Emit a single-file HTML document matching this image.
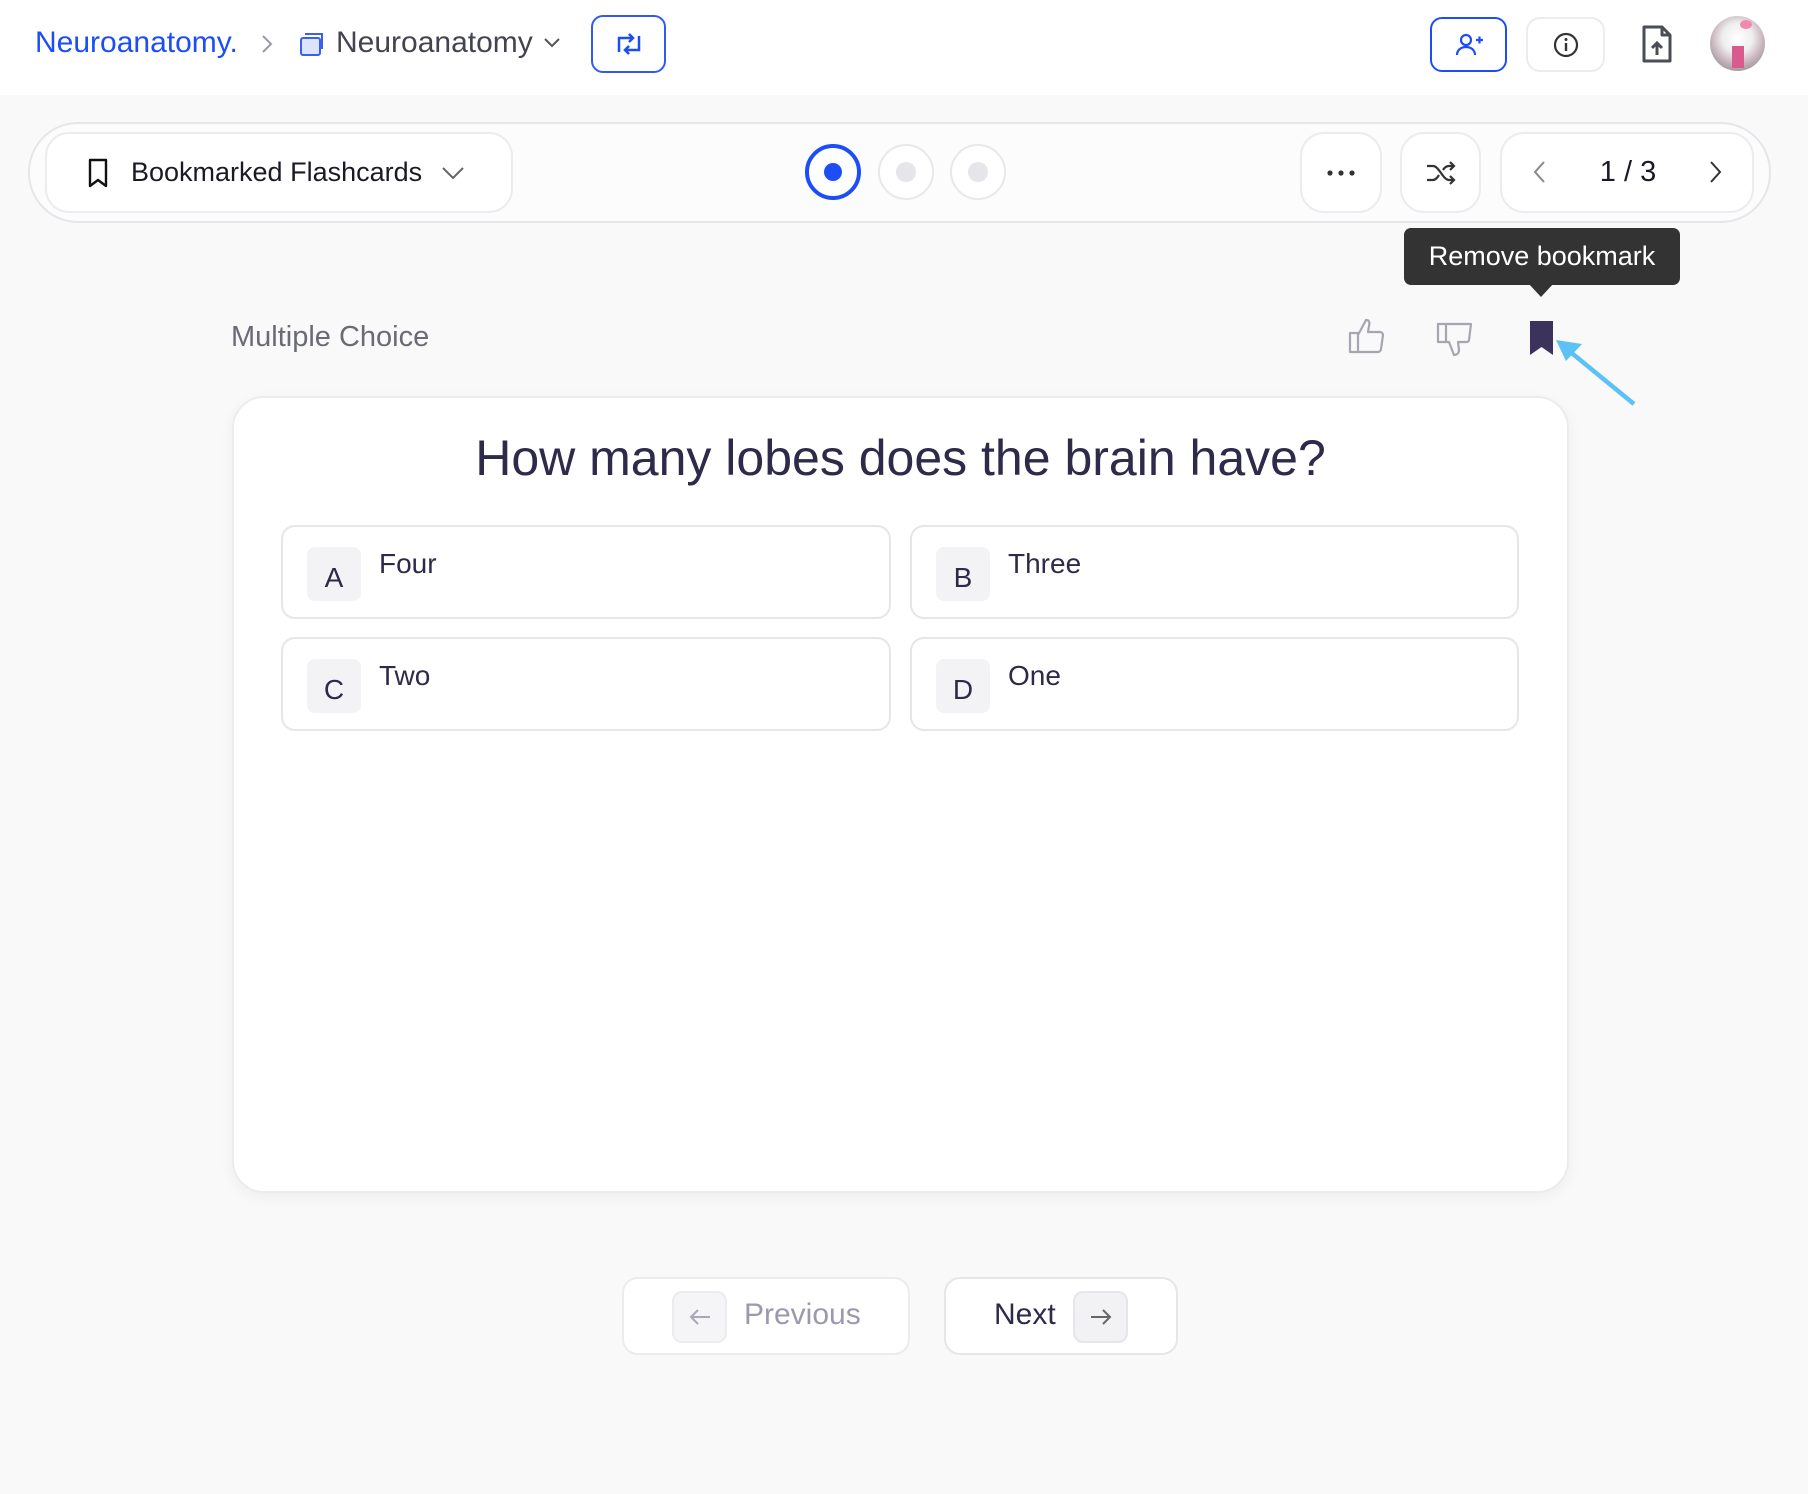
<!DOCTYPE html>
<html><head><meta charset="utf-8"><style>
*{box-sizing:border-box;margin:0;padding:0}
body{width:1808px;height:1494px;background:#f9f9fa;font-family:"Liberation Sans",sans-serif;position:relative;overflow:hidden;color:#2d2a4a}
.a{position:absolute}
.hdr{left:0;top:0;width:1808px;height:95px;background:#fff}
.btn{position:absolute;background:#fff;border:2px solid #ececef;border-radius:18px;display:flex;align-items:center;justify-content:center}
svg{display:block}
.opt{position:absolute;background:#fff;border:2px solid #e6e6ea;border-radius:14px}
.let{position:absolute;left:24px;top:20px;width:54px;height:54px;background:#f3f3f5;border-radius:8px;font-size:28px;display:flex;align-items:center;justify-content:center;padding-top:8px;color:#2d2a4a}
.ot{position:absolute;left:96px;top:21px;font-size:28px;color:#2d2a4a}
</style></head><body>
<div class="a hdr"></div>
<div class="a" style="left:35px;top:26px;font-size:30px;color:#1d4ef5">Neuroanatomy.</div>
<svg class="a" style="left:259px;top:32px" width="16" height="24" viewBox="0 0 16 24"><path d="M4 4l8 8-8 8" fill="none" stroke="#9a9aa5" stroke-width="2"/></svg>
<svg class="a" style="left:298px;top:30px" width="28" height="28" viewBox="0 0 28 28"><rect x="3" y="8" width="19" height="17" rx="2" fill="#dce4fd" stroke="#3a5ff0" stroke-width="2"/><path d="M7 4h17v15" fill="none" stroke="#3a5ff0" stroke-width="2"/></svg>
<div class="a" style="left:336px;top:26px;font-size:30px;color:#444450">Neuroanatomy</div>
<svg class="a" style="left:542px;top:36px" width="20" height="14" viewBox="0 0 20 14"><path d="M3 3l7 7 7-7" fill="none" stroke="#555" stroke-width="2"/></svg>
<div class="btn" style="left:591px;top:15px;width:75px;height:58px;border-color:#2f5cf0;border-radius:12px"><svg width="32" height="28" viewBox="0 0 32 28"><path d="M6 22V8h14M16 4l4 4-4 4M26 6v14H12M16 24l-4-4 4-4" fill="none" stroke="#1d4ef5" stroke-width="2.5"/></svg></div>
<div class="btn" style="left:1430px;top:17px;width:77px;height:55px;border-color:#1d4ef5;border-radius:12px"><svg width="30" height="30" viewBox="0 0 30 30"><circle cx="12" cy="10" r="5" fill="none" stroke="#1d4ef5" stroke-width="2.2"/><path d="M3 25c0-5 4-8 9-8s9 3 9 8M22 10h7M25.5 6.5v7" fill="none" stroke="#1d4ef5" stroke-width="2.2"/></svg></div>
<div class="btn" style="left:1526px;top:17px;width:79px;height:55px;border-radius:14px"><svg width="30" height="30" viewBox="0 0 30 30"><circle cx="15" cy="15" r="11" fill="none" stroke="#333" stroke-width="2.2"/><path d="M15 13v8" stroke="#333" stroke-width="2.4"/><circle cx="15" cy="9.5" r="1.5" fill="#333"/></svg></div>
<svg class="a" style="left:1641px;top:24px" width="32" height="40" viewBox="0 0 32 40"><path d="M3 3h18l8 8v26H3z M21 3v8h8" fill="none" stroke="#4a4d55" stroke-width="3" stroke-linejoin="round"/><path d="M16 31V19M11 24l5-5 5 5" fill="none" stroke="#4a4d55" stroke-width="3"/></svg>
<div class="a" style="left:1710px;top:16px;width:55px;height:55px;border-radius:50%;background:radial-gradient(circle at 50% 40%,#fff 0,#eee 35%,#c9b4bd 60%,#8c9390 85%);overflow:hidden"><div class="a" style="left:22px;top:30px;width:12px;height:22px;background:#d95a8d"></div><div class="a" style="left:30px;top:4px;width:12px;height:9px;background:#f08ab0;border-radius:50%"></div></div>

<div class="a" style="left:28px;top:122px;width:1743px;height:101px;border:2px solid #e6e6ea;border-radius:50px;background:#fcfcfd"></div>
<div class="btn" style="left:45px;top:132px;width:468px;height:81px;border-radius:24px;justify-content:flex-start;padding-left:38px">
<svg width="26" height="32" viewBox="0 0 26 32"><path d="M5 3h16v26l-8-6-8 6z" fill="none" stroke="#111" stroke-width="2.4" stroke-linejoin="round"/></svg>
<span style="font-size:27px;color:#1a1a24;margin-left:20px">Bookmarked Flashcards</span>
<svg style="margin-left:18px" width="26" height="18" viewBox="0 0 26 18"><path d="M3 4l10 10 10-10" fill="none" stroke="#666" stroke-width="2"/></svg></div>
<div class="a" style="left:805px;top:144px;width:56px;height:56px;border-radius:50%;border:4px solid #1d4ef5;background:#fff"></div>
<div class="a" style="left:824px;top:163px;width:18px;height:18px;border-radius:50%;background:#1d4ef5"></div>
<div class="a" style="left:878px;top:144px;width:56px;height:56px;border-radius:50%;border:2px solid #e8e8ec;background:#fff"></div>
<div class="a" style="left:896px;top:162px;width:20px;height:20px;border-radius:50%;background:#e6e6ea"></div>
<div class="a" style="left:950px;top:144px;width:56px;height:56px;border-radius:50%;border:2px solid #e8e8ec;background:#fff"></div>
<div class="a" style="left:968px;top:162px;width:20px;height:20px;border-radius:50%;background:#e6e6ea"></div>
<div class="btn" style="left:1300px;top:132px;width:82px;height:81px;border-radius:24px"><svg width="30" height="8" viewBox="0 0 30 8"><circle cx="4" cy="4" r="2.6" fill="#333"/><circle cx="15" cy="4" r="2.6" fill="#333"/><circle cx="26" cy="4" r="2.6" fill="#333"/></svg></div>
<div class="btn" style="left:1400px;top:132px;width:81px;height:81px;border-radius:24px"><svg width="32" height="28" viewBox="0 0 32 28"><path d="M2 7h6c6 0 10 14 16 14h5M2 21h6c2.5 0 4.5-2.5 6-5M18 11c1.5-2.5 3.5-4 6-4h5M25 3l4 4-4 4M25 17l4 4-4 4" fill="none" stroke="#333" stroke-width="2.2"/></svg></div>
<div class="btn" style="left:1500px;top:132px;width:254px;height:81px;border-radius:24px"></div>
<svg class="a" style="left:1530px;top:158px" width="20" height="28" viewBox="0 0 20 28"><path d="M14 4l-9 10 9 10" fill="none" stroke="#888" stroke-width="2"/></svg>
<div class="a" style="left:1578px;top:156px;width:100px;text-align:center;font-size:29px;color:#1a1a24">1 / 3</div>
<svg class="a" style="left:1705px;top:158px" width="20" height="28" viewBox="0 0 20 28"><path d="M6 4l9 10-9 10" fill="none" stroke="#333" stroke-width="2"/></svg>

<div class="a" style="left:1404px;top:228px;width:276px;height:57px;background:#333;border-radius:7px;color:#fff;font-size:27px;text-align:center;line-height:57px">Remove bookmark</div>
<div class="a" style="left:1528px;top:283px;width:0;height:0;border-left:13px solid transparent;border-right:13px solid transparent;border-top:14px solid #333"></div>

<div class="a" style="left:231px;top:321px;font-size:29px;color:#6b6b75">Multiple Choice</div>
<svg class="a" style="left:1347px;top:316px" width="40" height="40" viewBox="0 0 40 40"><path d="M3 17h8v19H3z M11 19l8-15c3 0 4 2 3 6l-1 6h12c2 0 3 2 3 3l-2 14c0 2-2 3-3 3H11" fill="none" stroke="#a6a6b0" stroke-width="2.2" stroke-linejoin="round"/></svg>
<svg class="a" style="left:1435px;top:320px" width="40" height="40" viewBox="0 0 40 40"><path d="M3 4h33l-2 16c0 1-1 2-2 2h-9l1 8c0 3-2 5-5 5l-5-13H3z M11 4v18" fill="none" stroke="#a6a6b0" stroke-width="2.2" stroke-linejoin="round"/></svg>
<svg class="a" style="left:1527px;top:319px" width="30" height="38" viewBox="0 0 30 38"><path d="M3 2h23v34l-11.5-8L3 36z" fill="#3b335c"/></svg>
<svg class="a" style="left:1550px;top:334px" width="90" height="74" viewBox="0 0 90 74"><path d="M84 70L18 16" stroke="#5bc2f3" stroke-width="4.5"/><path d="M6 6l26 4-16 17z" fill="#5bc2f3"/></svg>

<div class="a" style="left:232px;top:396px;width:1337px;height:797px;background:#fff;border:2px solid #ececef;border-radius:32px;box-shadow:0 4px 14px rgba(0,0,0,.05)"></div>
<div class="a" style="left:232px;top:429px;width:1337px;text-align:center;font-size:50px;color:#2d2a4a">How many lobes does the brain have?</div>
<div class="opt" style="left:281px;top:525px;width:610px;height:94px"><div class="let">A</div><div class="ot">Four</div></div>
<div class="opt" style="left:910px;top:525px;width:609px;height:94px"><div class="let">B</div><div class="ot">Three</div></div>
<div class="opt" style="left:281px;top:637px;width:610px;height:94px"><div class="let">C</div><div class="ot">Two</div></div>
<div class="opt" style="left:910px;top:637px;width:609px;height:94px"><div class="let">D</div><div class="ot">One</div></div>

<div class="btn" style="left:622px;top:1277px;width:288px;height:78px;border-radius:16px"></div>
<div class="a" style="left:672px;top:1291px;width:55px;height:52px;background:#f5f5f7;border:2px solid #ececef;border-radius:10px"></div>
<svg class="a" style="left:687px;top:1305px" width="26" height="24" viewBox="0 0 26 24"><path d="M23 12H4M11 5l-7 7 7 7" fill="none" stroke="#a9a9b5" stroke-width="2"/></svg>
<div class="a" style="left:744px;top:1298px;font-size:30px;color:#9b99ad">Previous</div>
<div class="btn" style="left:944px;top:1277px;width:234px;height:78px;border-radius:16px;border-color:#e6e6ea"></div>
<div class="a" style="left:994px;top:1298px;font-size:30px;color:#2d2a4a">Next</div>
<div class="a" style="left:1073px;top:1291px;width:55px;height:52px;background:#f2f2f4;border:2px solid #e6e6ea;border-radius:10px"></div>
<svg class="a" style="left:1088px;top:1305px" width="26" height="24" viewBox="0 0 26 24"><path d="M3 12h19M15 5l7 7-7 7" fill="none" stroke="#666" stroke-width="2"/></svg>
</body></html>
